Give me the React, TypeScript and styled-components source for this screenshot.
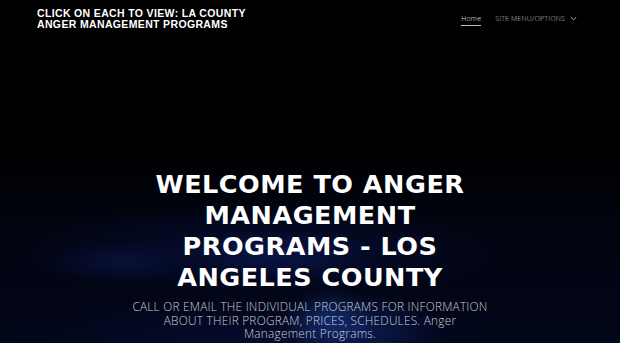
import React from "react";
import styled, { createGlobalStyle } from "styled-components";

const GlobalStyle = createGlobalStyle`
  html, body {
    margin: 0;
    padding: 0;
    background: #000;
  }
  * {
    box-sizing: border-box;
  }
`;

// smoky blue backdrop of the hero, built from soft gradients
const Page = styled.div`
  width: 620px;
  height: 343px;
  overflow: hidden;
  display: flex;
  flex-direction: column;
  background:
    radial-gradient(ellipse 60px 45px at 330px 320px, rgba(30, 70, 160, 0.45), transparent 75%),
    radial-gradient(ellipse 110px 50px at 360px 330px, rgba(18, 42, 115, 0.55), transparent 75%),
    radial-gradient(ellipse 110px 28px at 120px 262px, rgba(12, 24, 80, 0.5), transparent 70%),
    radial-gradient(ellipse 140px 35px at 280px 255px, rgba(12, 26, 85, 0.55), transparent 72%),
    radial-gradient(ellipse 320px 60px at 260px 250px, rgba(6, 14, 52, 0.95), transparent 80%),
    radial-gradient(ellipse 300px 60px at 250px 340px, rgba(5, 12, 46, 0.9), transparent 80%),
    linear-gradient(180deg, #000 0px, #000 150px, #01030b 200px, #02061a 343px);
`;

const Header = styled.header`
  display: flex;
  justify-content: space-between;
  align-items: flex-start;
  padding: 8px 43px 0 37px;
`;

const SiteTitle = styled.div`
  font-family: "Liberation Sans", Arial, sans-serif;
  font-weight: 700;
  font-size: 10.5px;
  line-height: 11px;
  letter-spacing: 0.35px;
  color: #fff;
  text-transform: uppercase;
`;

const Nav = styled.nav`
  display: flex;
  align-items: center;
  gap: 14px;
  padding-top: 6px;
`;

const NavItem = styled.a<{ active?: boolean }>`
  display: flex;
  align-items: center;
  gap: 5px;
  font-family: "Open Sans", "Liberation Sans", sans-serif;
  font-weight: 300;
  font-size: 7px;
  letter-spacing: 0.2px;
  color: ${({ active }) => (active ? "#e6e6e6" : "#c4c4c4")};
  text-decoration: none;
  padding-bottom: 2px;
  border-bottom: 1px solid ${({ active }) => (active ? "#bdbdbd" : "transparent")};
  cursor: pointer;
`;

const Hero = styled.section`
  flex: 1;
  display: flex;
  flex-direction: column;
  align-items: center;
  padding-top: 139px;
  text-align: center;
`;

const Headline = styled.h1`
  margin: 0;
  width: 350px;
  font-family: "DejaVu Sans", Verdana, sans-serif;
  font-weight: 700;
  font-size: 25.5px;
  line-height: 31px;
  letter-spacing: 0.5px;
  color: #fff;
`;

const Subtitle = styled.p`
  margin: 7px 0 0;
  width: 362px;
  font-family: "Open Sans", "Liberation Sans", sans-serif;
  font-weight: 300;
  font-size: 11.8px;
  line-height: 13.6px;
  letter-spacing: 0.25px;
  color: #c9ccd6;
`;

const Chevron = () => (
  <svg width="7" height="5" viewBox="0 0 7 5" fill="none">
    <path d="M0.8 1.2 L3.5 3.8 L6.2 1.2" stroke="#c4c4c4" strokeWidth="0.9" />
  </svg>
);

const App: React.FC = () => {
  return (
    <Page>
      <GlobalStyle />
      <Header>
        <SiteTitle>
          Click on each to view: LA County
          <br />
          Anger Management Programs
        </SiteTitle>
        <Nav>
          <NavItem active>Home</NavItem>
          <NavItem>
            SITE MENU/OPTIONS <Chevron />
          </NavItem>
        </Nav>
      </Header>
      <Hero>
        <Headline>WELCOME TO ANGER MANAGEMENT PROGRAMS - LOS ANGELES COUNTY</Headline>
        <Subtitle>
          CALL OR EMAIL THE INDIVIDUAL PROGRAMS FOR INFORMATION ABOUT THEIR PROGRAM, PRICES,
          SCHEDULES. Anger Management Programs.
        </Subtitle>
      </Hero>
    </Page>
  );
};

export default App;
